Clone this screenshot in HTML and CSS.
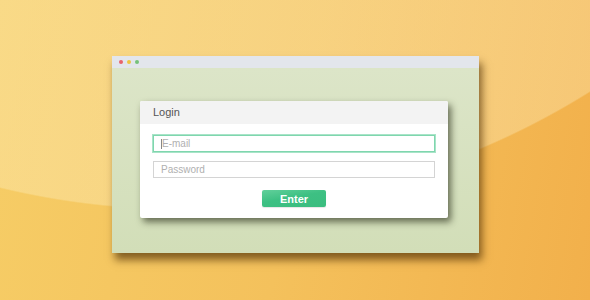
FILE: index.html
```html
<!DOCTYPE html>
<html lang="en">

<head>
  <meta charset="UTF-8">
  <title>Login</title>
  <link rel="stylesheet" href="styles.css">
</head>

<body>
  <div class="window">
    <div class="titlebar">
      <span class="dot red"></span>
      <span class="dot yellow"></span>
      <span class="dot green"></span>
    </div>
    <div class="window-body">
      <div class="card">
        <div class="card-header">Login</div>
        <form class="card-body">
          <div class="field focused"><span class="caret"></span>E-mail</div>
          <div class="field">Password</div>
          <div class="actions">
            <button type="button">Enter</button>
          </div>
        </form>
      </div>
    </div>
  </div>
</body>

</html>
```

FILE: styles.css
```css
* {
  box-sizing: border-box;
  margin: 0;
  padding: 0;
  font-family: "Liberation Sans", Arial, sans-serif;
}

html, body {
  height: 100%;
}

body {
  overflow: hidden;
  padding: 56px 0 0 112px;
  background:
    radial-gradient(circle 771px at 181px -561px, rgba(255, 245, 205, 0.32) 99.8%, rgba(255, 245, 205, 0) 100%),
    linear-gradient(100deg, #f6cd66 0%, #f4c15c 50%, #f2b04b 100%);
}

.window {
  width: 367px;
  height: 197px;
  display: flex;
  flex-direction: column;
  box-shadow: 3px 7px 8px rgba(70, 40, 0, 0.65);
}

.titlebar {
  height: 12px;
  background-color: #e3e6ec;
  display: flex;
  align-items: center;
  gap: 4px;
  padding-left: 7px;
}

.dot {
  width: 4px;
  height: 4px;
  border-radius: 50%;
}

.red { background-color: #e8636b; }
.yellow { background-color: #efc640; }
.green { background-color: #76c27a; }

.window-body {
  flex: 1;
  background: linear-gradient(#dce5c8, #d2deb8);
  padding: 33px 0 0 28px;
}

.card {
  width: 308px;
  height: 117px;
  background-color: #ffffff;
  border-radius: 2px;
  box-shadow: 3px 4px 7px rgba(40, 45, 25, 0.65);
  overflow: hidden;
}

.card-header {
  height: 23px;
  background-color: #f3f3f3;
  color: #555555;
  font-size: 11px;
  line-height: 23px;
  padding-left: 13px;
}

.card-body {
  padding: 11px 13px 0 13px;
  display: flex;
  flex-direction: column;
  gap: 9px;
}

.field {
  height: 17px;
  width: 282px;
  border: 1px solid #d4d4d4;
  color: #b0b0b0;
  font-size: 10px;
  line-height: 15px;
  padding-left: 7px;
  display: flex;
  align-items: center;
}

.field.focused {
  border: 1px solid #7fd6ae;
  box-shadow: 0 0 0 1px #a8e4c8;
}

.caret {
  width: 1px;
  height: 10px;
  background-color: #888888;
}

.actions {
  display: flex;
  justify-content: center;
  padding-top: 3px;
}

button {
  width: 64px;
  height: 17px;
  border: none;
  border-radius: 2px;
  color: #ffffff;
  font-size: 11px;
  font-weight: bold;
  background: linear-gradient(170deg, #62d09b 0%, #3dc083 45%, #3bbd7f 100%);
  box-shadow: 0 1px 1px rgba(0, 0, 0, 0.1);
}
```
